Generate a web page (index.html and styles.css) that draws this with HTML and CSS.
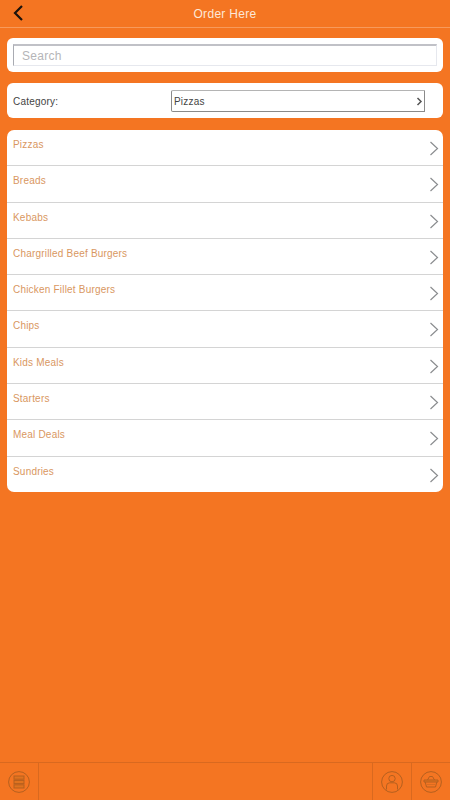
FILE: index.html
```html
<!DOCTYPE html>
<html lang="en">
<head>
  <meta charset="UTF-8" />
  <title>Order Here</title>
  <link rel="stylesheet" href="styles.css">
</head>
<body>

  <div class="header">
    <div class="back">
      <svg width="12" height="16" viewBox="0 0 12 16"><path d="M10 1 L3 8 L10 15" fill="none" stroke="#1c130c" stroke-width="2.2"/></svg>
    </div>
    <h1>Order Here</h1>
  </div>

  <div class="content">
    <div class="card search-card">
      <input type="text" class="search" placeholder="Search" />
    </div>

    <div class="card category-card">
      <span class="category-label">Category:</span>
      <div class="select">
        <span>Pizzas</span>
        <svg width="7" height="9" viewBox="0 0 7 9"><path d="M1.5 1 L5 4.5 L1.5 8" fill="none" stroke="#555" stroke-width="1.5"/></svg>
      </div>
    </div>

    <div class="card list">
      <div class="row"><span>Pizzas</span><svg class="chevron" width="10" height="15" viewBox="0 0 10 15"><path d="M1.5 1 L8.5 7.5 L1.5 14" fill="none" stroke="#8b8d90" stroke-width="1.2"/></svg></div>
      <div class="row"><span>Breads</span><svg class="chevron" width="10" height="15" viewBox="0 0 10 15"><path d="M1.5 1 L8.5 7.5 L1.5 14" fill="none" stroke="#8b8d90" stroke-width="1.2"/></svg></div>
      <div class="row"><span>Kebabs</span><svg class="chevron" width="10" height="15" viewBox="0 0 10 15"><path d="M1.5 1 L8.5 7.5 L1.5 14" fill="none" stroke="#8b8d90" stroke-width="1.2"/></svg></div>
      <div class="row"><span>Chargrilled Beef Burgers</span><svg class="chevron" width="10" height="15" viewBox="0 0 10 15"><path d="M1.5 1 L8.5 7.5 L1.5 14" fill="none" stroke="#8b8d90" stroke-width="1.2"/></svg></div>
      <div class="row"><span>Chicken Fillet Burgers</span><svg class="chevron" width="10" height="15" viewBox="0 0 10 15"><path d="M1.5 1 L8.5 7.5 L1.5 14" fill="none" stroke="#8b8d90" stroke-width="1.2"/></svg></div>
      <div class="row"><span>Chips</span><svg class="chevron" width="10" height="15" viewBox="0 0 10 15"><path d="M1.5 1 L8.5 7.5 L1.5 14" fill="none" stroke="#8b8d90" stroke-width="1.2"/></svg></div>
      <div class="row"><span>Kids Meals</span><svg class="chevron" width="10" height="15" viewBox="0 0 10 15"><path d="M1.5 1 L8.5 7.5 L1.5 14" fill="none" stroke="#8b8d90" stroke-width="1.2"/></svg></div>
      <div class="row"><span>Starters</span><svg class="chevron" width="10" height="15" viewBox="0 0 10 15"><path d="M1.5 1 L8.5 7.5 L1.5 14" fill="none" stroke="#8b8d90" stroke-width="1.2"/></svg></div>
      <div class="row"><span>Meal Deals</span><svg class="chevron" width="10" height="15" viewBox="0 0 10 15"><path d="M1.5 1 L8.5 7.5 L1.5 14" fill="none" stroke="#8b8d90" stroke-width="1.2"/></svg></div>
      <div class="row"><span>Sundries</span><svg class="chevron" width="10" height="15" viewBox="0 0 10 15"><path d="M1.5 1 L8.5 7.5 L1.5 14" fill="none" stroke="#8b8d90" stroke-width="1.2"/></svg></div>
    </div>
  </div>

  <div class="footer">
    <div class="tab tab-menu">
      <svg width="22" height="22" viewBox="0 0 22 22" fill="none" stroke="#b5601f" stroke-width="1">
        <circle cx="11" cy="11" r="10.4"/>
        <rect x="6" y="5" width="10" height="3.2" fill="#e0731f"/>
        <rect x="6" y="9.4" width="10" height="3.2" fill="#e0731f"/>
        <rect x="6" y="13.8" width="10" height="3.2" fill="#e0731f"/>
      </svg>
    </div>
    <div class="tab tab-spacer"></div>
    <div class="tab tab-user">
      <svg width="22" height="22" viewBox="0 0 22 22" fill="none" stroke="#b5601f" stroke-width="1">
        <circle cx="11" cy="11" r="10.4"/>
        <circle cx="11" cy="7.6" r="3.2"/>
        <path d="M5.5 18.5 V15 Q5.5 11.8 8.7 11.8 H13.3 Q16.5 11.8 16.5 15 V18.5"/>
      </svg>
    </div>
    <div class="tab tab-basket">
      <svg width="22" height="22" viewBox="0 0 22 22" fill="none" stroke="#b5601f" stroke-width="1">
        <circle cx="11" cy="11" r="10.4"/>
        <path d="M7.5 9 L9.5 5.5 H12.5 L14.5 9"/>
        <path d="M4 9 H18 V11 H4 Z" fill="#e0731f"/>
        <path d="M5.2 11 L6.5 16 H15.5 L16.8 11"/>
        <path d="M8 13 V13.8 M10 13 V13.8 M12 13 V13.8 M14 13 V13.8"/>
      </svg>
    </div>
  </div>

</body>
</html>
```

FILE: styles.css
```css
* {
  box-sizing: border-box;
}
html, body {
  height: 100%;
}
body {
  margin: 0;
  background: #f47522;
  font-family: "Liberation Sans", Arial, sans-serif;
  display: flex;
  flex-direction: column;
}
.header {
  height: 28px;
  display: flex;
  align-items: center;
  justify-content: center;
  position: relative;
  border-bottom: 1px solid #f79a5c;
}
.header h1 {
  margin: 0;
  font-size: 12px;
  font-weight: normal;
  color: #fde8d8;
  letter-spacing: 0.3px;
}
.back {
  position: absolute;
  left: 12px;
  top: 5px;
  line-height: 0;
}
.content {
  flex: 1;
  padding: 10px 7px 0;
}
.card {
  background: #fff;
  border-radius: 6px;
}
.search-card {
  height: 34px;
  padding: 6px;
  margin-bottom: 11px;
}
.search {
  display: block;
  width: 100%;
  height: 22px;
  padding: 0 8px;
  border: 1px solid #e6e8ee;
  border-top: 2px solid #c0c1c7;
  border-left: 1px solid #a9abb2;
  font-family: inherit;
  font-size: 12px;
  letter-spacing: 0.3px;
  outline: none;
}
.search::placeholder {
  color: #b5b5b8;
}
.category-card {
  height: 35px;
  display: flex;
  align-items: center;
  padding: 0 18px 0 6px;
  margin-bottom: 12px;
}
.category-label {
  width: 158px;
  padding-top: 1px;
  font-size: 10px;
  letter-spacing: 0.2px;
  color: #444;
}
.select {
  flex: 1;
  height: 22px;
  display: flex;
  align-items: center;
  justify-content: space-between;
  padding: 1px 1px 0 2px;
  border: 1px solid #8a8a8a;
  border-top-color: #b4b4b4;
  border-radius: 2px 0 0 2px;
  font-size: 10px;
  letter-spacing: 0.2px;
  color: #444;
}
.list {
  height: 362px;
  display: flex;
  flex-direction: column;
  overflow: hidden;
  border-radius: 7px;
}
.row {
  flex: 1;
  display: flex;
  justify-content: space-between;
  padding: 9px 4px 0 6px;
  border-bottom: 1px solid #d4d4d4;
  font-size: 10px;
  letter-spacing: 0.2px;
  color: #d9975f;
}
.row:last-child {
  border-bottom: none;
}
.chevron {
  margin-top: 2px;
}
.footer {
  height: 38px;
  display: flex;
  border-top: 1px solid #d9691f;
}
.tab {
  display: flex;
  align-items: center;
  justify-content: center;
  border-right: 1px solid #d9691f;
}
.tab-menu {
  width: 39px;
}
.tab-spacer {
  width: 334px;
}
.tab-user {
  width: 39px;
}
.tab-basket {
  flex: 1;
  border-right: none;
}
```
